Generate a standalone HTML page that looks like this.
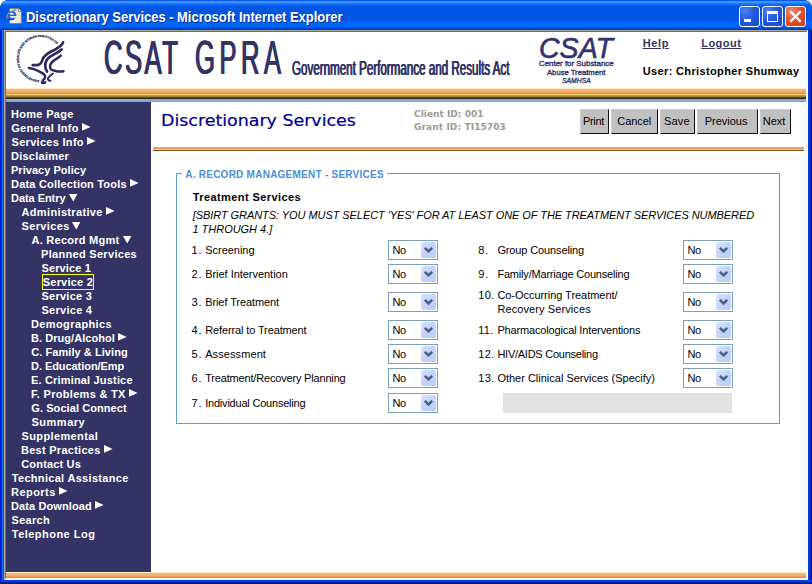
<!DOCTYPE html>
<html lang="en"><head><meta charset="utf-8"><title>Discretionary Services - Microsoft Internet Explorer</title>
<style>
html,body{margin:0;padding:0;background:#fff;}
body{width:812px;height:584px;overflow:hidden;position:relative;font-family:"Liberation Sans",Arial,sans-serif;font-size:11px;color:#000;}
#win{position:absolute;left:0;top:0;width:812px;height:584px;background:#0a3fd6;overflow:hidden;}
#win>*{position:absolute;}
.tx{white-space:nowrap;transform-origin:0 0;}
#tbar{left:0;top:0;width:812px;height:30px;background:linear-gradient(to bottom,#0a58e8 0px,#0a58e8 1px,#3a92ff 1px,#3a92ff 2px,#3890ff 2px,#3890ff 3px,#1a7cff 3px,#1a7cff 4px,#0a6cf8 4px,#0a6cf8 5px,#0560ec 5px,#0560ec 6px,#0359e6 6px,#0359e6 7px,#0256e3 7px,#0256e3 8px,#0055e2 8px,#0055e2 9px,#0055e2 9px,#0055e2 10px,#0055e2 10px,#0055e2 11px,#0055e2 11px,#0055e2 12px,#0055e2 12px,#0055e2 13px,#0055e2 13px,#0055e2 14px,#0055e2 14px,#0055e2 15px,#0055e2 15px,#0055e2 16px,#0055e2 16px,#0055e2 17px,#0055e2 17px,#0055e2 18px,#0055e2 18px,#0055e2 19px,#0058ea 19px,#0058ea 20px,#005cf2 20px,#005cf2 21px,#0062f8 21px,#0062f8 22px,#0066fc 22px,#0066fc 23px,#0068fe 23px,#0068fe 24px,#0067fc 24px,#0067fc 25px,#0064f8 25px,#0064f8 26px,#0060f0 26px,#0060f0 27px,#0058e4 27px,#0058e4 28px,#004cd0 28px,#004cd0 29px,#003cb8 29px,#003cb8 30px);}
.ttl{font:bold 15px/18px "Liberation Sans",Arial,sans-serif;color:#fff;text-shadow:1px 1px 0 #0a2a8a;}
#edge{left:4px;top:30px;width:802px;height:548px;border:1px solid;border-color:#aca899 #fff #fff #aca899;}
#edge2{left:5px;top:31px;width:800px;height:546px;border:1px solid;border-color:#716f64 #f1efe2 #f1efe2 #716f64;}
#client{left:6px;top:32px;width:800px;height:546px;background:#fff;}
#band1{left:6px;top:88px;width:800px;height:11px;background:linear-gradient(to bottom,#fef0b0 0px,#fef0b0 1px,#f1b68a 1px,#f1b68a 2px,#f0b387 2px,#f0b387 3px,#eead7e 3px,#eead7e 4px,#ec9c62 4px,#ec9c62 5px,#e98d4a 5px,#e98d4a 6px,#f0d060 6px,#f0d060 7px,#b09848 7px,#b09848 8px,#988440 8px,#988440 9px,#605020 9px,#605020 10px,#302810 10px,#302810 11px);}
#band2{left:6px;top:99px;width:800px;height:3px;background:linear-gradient(to bottom,#90acda 0px,#90acda 1px,#90acda 1px,#90acda 2px,#80a0d0 2px,#80a0d0 3px);}
#band3{left:6px;top:572px;width:800px;height:6px;background:linear-gradient(to bottom,#fef0b0 0px,#fef0b0 1px,#f1b68a 1px,#f1b68a 2px,#f0b387 2px,#f0b387 3px,#eead7e 3px,#eead7e 4px,#ec9c62 4px,#ec9c62 5px,#e98d4a 5px,#e98d4a 6px);}
#side{left:6px;top:102px;width:145px;height:470px;background:#333366;}
.mi{font:bold 11px/14px "Liberation Sans",Arial,sans-serif;color:#fff;}
#cur{left:42px;top:274px;width:50px;height:14px;border:1px solid #ffff00;}
.h1{font:16px/22px "DejaVu Sans","Liberation Sans",sans-serif;color:#000094;-webkit-text-stroke:0.2px #000094;}
.ids{font:bold 9px/13px "DejaVu Sans","Liberation Sans",sans-serif;color:#999;}
.btn{top:109px;height:25px;box-sizing:border-box;background:#c0c0c0;border:1px solid;border-color:#ccc #111 #111 #ccc;}
.bt{font:11px/14px "Liberation Sans",Arial,sans-serif;color:#000;}
#hr{left:153px;top:147px;width:651px;height:4px;background:linear-gradient(to bottom,#f0a878 0,#f0a878 1px,#eb9860 1px,#eb9860 2px,#f2d060 2px,#f2d060 3px,#6b5c22 3px,#6b5c22 4px);}
#fs{left:176px;top:173px;width:602px;height:249px;border:1px solid #5b9bd5;}
#lgbg{left:182px;top:170px;width:205px;height:8px;background:#fff;}
.leg{font:bold 10px/14px "Liberation Sans",Arial,sans-serif;color:#4a8fd6;}
.ts{font:bold 11px/14px "Liberation Sans",Arial,sans-serif;}
.note{font:italic 11px/14px "Liberation Sans",Arial,sans-serif;}
.lbl{font:11px/14px "Liberation Sans",Arial,sans-serif;}
.sel{width:48px;height:18px;border:1px solid #7f9db9;background:#fff;font:11px/18px "Liberation Sans",Arial,sans-serif;}
.sel span{position:absolute;left:3.5px;top:0;letter-spacing:-0.4px;}
.sel b{position:absolute;left:32px;top:1px;width:15px;height:16px;border-radius:2px;background:linear-gradient(135deg,#d6e2fe 0%,#c3d3fc 55%,#b7cafa 100%);}
.sel b svg{position:absolute;left:3px;top:5px;}
#spec{left:503px;top:393px;width:227px;height:18px;background:#e3e3e3;border:1px solid #dedede;}
.lnk{font:bold 11px/14px "Liberation Sans",Arial,sans-serif;color:#333366;text-decoration:underline;}
.usr{font:bold 11px/14px "Liberation Sans",Arial,sans-serif;color:#000;}
.gpra{font:47.5px/56px "Liberation Sans",Arial,sans-serif;color:#333366;text-shadow:0.9px 0 0 #333366,-0.9px 0 0 #333366;}
.gov{font:20.3px/24px "Liberation Sans",Arial,sans-serif;color:#333366;text-shadow:0.6px 0 0 #333366,-0.6px 0 0 #333366;}
.lg1{font:italic 30px/22px "Liberation Sans",Arial,sans-serif;color:#33336e;-webkit-text-stroke:0.6px #33336e;}
.lg2{font:8px/10px "Liberation Sans",Arial,sans-serif;color:#2e2e66;-webkit-text-stroke:0.35px #2e2e66;}
.lg4{font:italic 7px/10px "Liberation Sans",Arial,sans-serif;color:#2e2e66;-webkit-text-stroke:0.3px #2e2e66;}
#bl{left:0;top:30px;width:4px;height:554px;background:linear-gradient(to right,#0019cf 0,#0019cf 1px,#0831d9 1px,#0831d9 2px,#166aee 2px,#166aee 3px,#0855dd 3px,#0855dd 4px);}
#br{left:808px;top:30px;width:4px;height:554px;background:linear-gradient(to right,#003ce6 0,#003ce6 1px,#0041d8 1px,#0041d8 2px,#001ea0 2px,#001ea0 3px,#00138c 3px,#00138c 4px);}
#bb{left:0;top:580px;width:812px;height:4px;background:linear-gradient(to bottom,#003ce6 0,#003ce6 1px,#0041d8 1px,#0041d8 2px,#001ea0 2px,#001ea0 3px,#00138c 3px,#00138c 4px);}
#tbar{border-radius:7px 7px 0 0;}
#cornl{left:0;top:0;width:7px;height:7px;background:radial-gradient(circle at 7px 7px,transparent 0,transparent 6.5px,#fff 7px);}
#cornr{left:805px;top:0;width:7px;height:7px;background:radial-gradient(circle at 0 7px,transparent 0,transparent 6.5px,#ece9d8 7px);}
.wb{top:6px;width:19px;height:19px;border:1px solid #fff;border-radius:3px;background:radial-gradient(circle at 25% 20%,#4a80f4 0,#255ade 45%,#1a46cc 100%);}
.wb i{position:absolute;box-sizing:border-box;}
.wc{background:radial-gradient(circle at 30% 25%,#f09070 0,#e0502a 50%,#c83a18 100%);}
.num{letter-spacing:1px;}
.num2{letter-spacing:0.35px;}

</style></head>
<body>
<div id="win">
<div id="tbar"></div>
<div id="bl"></div>
<div id="br"></div>
<div id="bb"></div>
<div id="cornl"></div>
<div id="cornr"></div>
<svg id="ieicon" style="left:6px;top:7px" width="18" height="18" viewBox="0 0 18 18">
<path d="M3.7 1.6 H12.6 L15.4 4.4 V16.4 H3.7 Z" fill="#ebebe0" stroke="#8a7f66" stroke-width="1"/>
<path d="M4.4 2.2 H9 V15.8 H4.4 Z" fill="#fbfbf6"/>
<path d="M12.6 1.6 V4.4 H15.4" fill="#fff" stroke="#6b6350" stroke-width="0.8"/>
<ellipse cx="5.6" cy="8.3" rx="3.7" ry="3.6" fill="none" stroke="#2a5ce0" stroke-width="2.1"/>
<rect x="2.4" y="7.6" width="6.6" height="1.5" fill="#2a5ce0"/>
<rect x="6.2" y="9.1" width="4.2" height="1.6" fill="#f3f3ea"/>
<path d="M0.6 11.6 C0.9 7.2 4.2 3.6 9.6 3.2" fill="none" stroke="#d8b040" stroke-width="1"/>
<path d="M6.5 3.4 C8.2 2.8 9.8 2.9 10.4 3.6" fill="none" stroke="#35b0f0" stroke-width="1.2"/>
<path d="M2.6 12.2 C4 13 6 13 8 12.3" fill="none" stroke="#10207a" stroke-width="0.9"/>
</svg>
<div class="wb" style="left:739px"><i style="left:4px;top:12px;width:7px;height:3px;background:#fff"></i></div>
<div class="wb" style="left:762px"><i style="left:4px;top:4px;width:11px;height:11px;border:1px solid #fff;border-top-width:3px"></i></div>
<div class="wb wc" style="left:785px"><svg width="19" height="19" viewBox="0 0 19 19" style="position:absolute;left:0;top:0"><path d="M5 5 L14 14 M14 5 L5 14" stroke="#fff" stroke-width="2.2" stroke-linecap="square" fill="none"/></svg></div>
<div id="edge"></div>
<div id="edge2"></div>
<div id="client"></div>
<div id="band1"></div>
<div id="band2"></div>
<div id="band3"></div>
<div id="side"></div>
<div id="cur"></div>
<svg id="hhs" style="left:8px;top:32px" width="70" height="60" viewBox="0 0 681 584">
<defs><path id="hhsarc" d="M 303 470 A 211 211 0 1 1 477 123"/></defs>
<text font-family="Liberation Serif, serif" font-weight="bold" font-size="29" fill="#2e2e66" stroke="#2e2e66" stroke-width="2.2" textLength="850" lengthAdjust="spacingAndGlyphs"><textPath href="#hhsarc">DEPARTMENT OF HEALTH AND HUMAN SERVICES USA</textPath></text>
<g fill="none" stroke="#2a2a62" stroke-linecap="round" stroke-linejoin="round">
<path d="M536 100 C526 135 480 160 430 185 C380 210 345 235 335 270 C328 300 310 318 285 322 C265 325 250 322 240 322" stroke-width="26"/>
<path d="M522 170 C500 195 450 215 410 240 C375 262 362 295 362 330 C362 350 370 370 380 385" stroke-width="26"/>
<path d="M514 230 C495 250 455 268 430 292 C410 312 405 340 415 362 C440 378 500 392 540 382" stroke-width="24"/>
<path d="M203 350 C240 352 290 375 330 398 C360 415 372 435 355 455 C340 470 330 480 330 493 C340 498 355 496 363 490" stroke-width="24"/>
<path d="M438 404 C420 415 400 430 388 452 C385 465 395 473 413 474" stroke-width="19"/>
</g>
</svg>
<div class="btn" style="left:580px;width:29px"></div>
<div class="btn" style="left:611px;width:47px"></div>
<div class="btn" style="left:660px;width:35px"></div>
<div class="btn" style="left:697px;width:61px"></div>
<div class="btn" style="left:760px;width:31px"></div>
<div id="hr"></div>
<div id="fs"></div>
<div id="lgbg"></div>
<div id="spec"></div>
<svg class="arw" style="left:82.1px;top:123.4px" width="9" height="9" viewBox="0 0 9 9"><path d="M0 0 L8.6 3.9 L0 7.8 Z" fill="#fff"/></svg>
<svg class="arw" style="left:87.1px;top:137.4px" width="9" height="9" viewBox="0 0 9 9"><path d="M0 0 L8.6 3.9 L0 7.8 Z" fill="#fff"/></svg>
<svg class="arw" style="left:130.0px;top:179.4px" width="9" height="9" viewBox="0 0 9 9"><path d="M0 0 L8.6 3.9 L0 7.8 Z" fill="#fff"/></svg>
<svg class="arw" style="left:69.1px;top:194px" width="9" height="9" viewBox="0 0 9 9"><path d="M0 0 L8.4 0 L4.2 7.4 Z" fill="#fff"/></svg>
<svg class="arw" style="left:105.9px;top:207.4px" width="9" height="9" viewBox="0 0 9 9"><path d="M0 0 L8.6 3.9 L0 7.8 Z" fill="#fff"/></svg>
<svg class="arw" style="left:72.4px;top:222px" width="9" height="9" viewBox="0 0 9 9"><path d="M0 0 L8.4 0 L4.2 7.4 Z" fill="#fff"/></svg>
<svg class="arw" style="left:122.6px;top:236px" width="9" height="9" viewBox="0 0 9 9"><path d="M0 0 L8.4 0 L4.2 7.4 Z" fill="#fff"/></svg>
<svg class="arw" style="left:118.0px;top:333.4px" width="9" height="9" viewBox="0 0 9 9"><path d="M0 0 L8.6 3.9 L0 7.8 Z" fill="#fff"/></svg>
<svg class="arw" style="left:129.1px;top:389.4px" width="9" height="9" viewBox="0 0 9 9"><path d="M0 0 L8.6 3.9 L0 7.8 Z" fill="#fff"/></svg>
<svg class="arw" style="left:103.7px;top:445.4px" width="9" height="9" viewBox="0 0 9 9"><path d="M0 0 L8.6 3.9 L0 7.8 Z" fill="#fff"/></svg>
<svg class="arw" style="left:58.9px;top:487.4px" width="9" height="9" viewBox="0 0 9 9"><path d="M0 0 L8.6 3.9 L0 7.8 Z" fill="#fff"/></svg>
<svg class="arw" style="left:94.9px;top:501.4px" width="9" height="9" viewBox="0 0 9 9"><path d="M0 0 L8.6 3.9 L0 7.8 Z" fill="#fff"/></svg>
<div class="sel" style="left:388px;top:240px"><span>No</span><b><svg width="9" height="6" viewBox="0 0 9 6"><path d="M0.8 0.8 L4.5 4.5 L8.2 0.8" fill="none" stroke="#4d6185" stroke-width="2.5"/></svg></b></div>
<div class="sel" style="left:388px;top:264px"><span>No</span><b><svg width="9" height="6" viewBox="0 0 9 6"><path d="M0.8 0.8 L4.5 4.5 L8.2 0.8" fill="none" stroke="#4d6185" stroke-width="2.5"/></svg></b></div>
<div class="sel" style="left:388px;top:292px"><span>No</span><b><svg width="9" height="6" viewBox="0 0 9 6"><path d="M0.8 0.8 L4.5 4.5 L8.2 0.8" fill="none" stroke="#4d6185" stroke-width="2.5"/></svg></b></div>
<div class="sel" style="left:388px;top:320px"><span>No</span><b><svg width="9" height="6" viewBox="0 0 9 6"><path d="M0.8 0.8 L4.5 4.5 L8.2 0.8" fill="none" stroke="#4d6185" stroke-width="2.5"/></svg></b></div>
<div class="sel" style="left:388px;top:344px"><span>No</span><b><svg width="9" height="6" viewBox="0 0 9 6"><path d="M0.8 0.8 L4.5 4.5 L8.2 0.8" fill="none" stroke="#4d6185" stroke-width="2.5"/></svg></b></div>
<div class="sel" style="left:388px;top:368px"><span>No</span><b><svg width="9" height="6" viewBox="0 0 9 6"><path d="M0.8 0.8 L4.5 4.5 L8.2 0.8" fill="none" stroke="#4d6185" stroke-width="2.5"/></svg></b></div>
<div class="sel" style="left:388px;top:393px"><span>No</span><b><svg width="9" height="6" viewBox="0 0 9 6"><path d="M0.8 0.8 L4.5 4.5 L8.2 0.8" fill="none" stroke="#4d6185" stroke-width="2.5"/></svg></b></div>
<div class="sel" style="left:683px;top:240px"><span>No</span><b><svg width="9" height="6" viewBox="0 0 9 6"><path d="M0.8 0.8 L4.5 4.5 L8.2 0.8" fill="none" stroke="#4d6185" stroke-width="2.5"/></svg></b></div>
<div class="sel" style="left:683px;top:264px"><span>No</span><b><svg width="9" height="6" viewBox="0 0 9 6"><path d="M0.8 0.8 L4.5 4.5 L8.2 0.8" fill="none" stroke="#4d6185" stroke-width="2.5"/></svg></b></div>
<div class="sel" style="left:683px;top:292px"><span>No</span><b><svg width="9" height="6" viewBox="0 0 9 6"><path d="M0.8 0.8 L4.5 4.5 L8.2 0.8" fill="none" stroke="#4d6185" stroke-width="2.5"/></svg></b></div>
<div class="sel" style="left:683px;top:320px"><span>No</span><b><svg width="9" height="6" viewBox="0 0 9 6"><path d="M0.8 0.8 L4.5 4.5 L8.2 0.8" fill="none" stroke="#4d6185" stroke-width="2.5"/></svg></b></div>
<div class="sel" style="left:683px;top:344px"><span>No</span><b><svg width="9" height="6" viewBox="0 0 9 6"><path d="M0.8 0.8 L4.5 4.5 L8.2 0.8" fill="none" stroke="#4d6185" stroke-width="2.5"/></svg></b></div>
<div class="sel" style="left:683px;top:368px"><span>No</span><b><svg width="9" height="6" viewBox="0 0 9 6"><path d="M0.8 0.8 L4.5 4.5 L8.2 0.8" fill="none" stroke="#4d6185" stroke-width="2.5"/></svg></b></div>
<div id="m0" class="tx mi" style="left:11.00px;top:107px;letter-spacing:0.306px">Home Page</div>
<div id="m1" class="tx mi" style="left:11.25px;top:121px;letter-spacing:0.282px">General Info</div>
<div id="m2" class="tx mi" style="left:11.50px;top:135px;letter-spacing:0.300px">Services Info</div>
<div id="m3" class="tx mi" style="left:11.00px;top:149px;letter-spacing:0.250px">Disclaimer</div>
<div id="m4" class="tx mi" style="left:11.00px;top:163px;letter-spacing:0.031px">Privacy Policy</div>
<div id="m5" class="tx mi" style="left:11.00px;top:177px;letter-spacing:0.197px">Data Collection Tools</div>
<div id="m6" class="tx mi" style="left:11.00px;top:191px;letter-spacing:-0.050px">Data Entry</div>
<div id="m7" class="tx mi" style="left:21.50px;top:205px;letter-spacing:0.350px">Administrative</div>
<div id="m8" class="tx mi" style="left:21.50px;top:219px;letter-spacing:0.357px">Services</div>
<div id="m9" class="tx mi" style="left:31.50px;top:233px;letter-spacing:0.254px">A. Record Mgmt</div>
<div id="m10" class="tx mi" style="left:41.00px;top:247px;letter-spacing:0.307px">Planned Services</div>
<div id="m11" class="tx mi" style="left:41.50px;top:261px;letter-spacing:0.119px">Service 1</div>
<div id="m12" class="tx mi" style="left:42.75px;top:275px;letter-spacing:0.213px">Service 2</div>
<div id="m13" class="tx mi" style="left:41.50px;top:289px;letter-spacing:0.250px">Service 3</div>
<div id="m14" class="tx mi" style="left:41.50px;top:303px;letter-spacing:0.269px">Service 4</div>
<div id="m15" class="tx mi" style="left:31.00px;top:317px;letter-spacing:0.386px">Demographics</div>
<div id="m16" class="tx mi" style="left:31.00px;top:331px;letter-spacing:0.050px">B. Drug/Alcohol</div>
<div id="m17" class="tx mi" style="left:31.25px;top:345px;letter-spacing:0.062px">C. Family &amp; Living</div>
<div id="m18" class="tx mi" style="left:31.00px;top:359px;letter-spacing:-0.057px">D. Education/Emp</div>
<div id="m19" class="tx mi" style="left:31.00px;top:373px;letter-spacing:0.172px">E. Criminal Justice</div>
<div id="m20" class="tx mi" style="left:31.00px;top:387px;letter-spacing:0.307px">F. Problems &amp; TX</div>
<div id="m21" class="tx mi" style="left:31.25px;top:401px;letter-spacing:0.081px">G. Social Connect</div>
<div id="m22" class="tx mi" style="left:31.50px;top:415px;letter-spacing:0.508px">Summary</div>
<div id="m23" class="tx mi" style="left:21.50px;top:429px;letter-spacing:0.382px">Supplemental</div>
<div id="m24" class="tx mi" style="left:21.00px;top:443px;letter-spacing:0.269px">Best Practices</div>
<div id="m25" class="tx mi" style="left:21.25px;top:457px;letter-spacing:0.167px">Contact Us</div>
<div id="m26" class="tx mi" style="left:11.75px;top:471px;letter-spacing:0.311px">Technical Assistance</div>
<div id="m27" class="tx mi" style="left:11.00px;top:485px;letter-spacing:0.467px">Reports</div>
<div id="m28" class="tx mi" style="left:11.00px;top:499px;letter-spacing:0.108px">Data Download</div>
<div id="m29" class="tx mi" style="left:11.50px;top:513px;letter-spacing:0.310px">Search</div>
<div id="m30" class="tx mi" style="left:11.75px;top:527px;letter-spacing:0.475px">Telephone Log</div>
<div id="ttl" class="tx ttl" style="left:25.50px;top:8.4px;transform:scaleX(0.8629)">Discretionary Services - Microsoft Internet Explorer</div>
<div id="gp1" class="tx gpra" style="left:104.25px;top:30px;letter-spacing:4.568px;transform:scaleX(0.5400)">CSAT</div>
<div id="gp2" class="tx gpra" style="left:194.50px;top:30px;letter-spacing:8.210px;transform:scaleX(0.5400)">GPRA</div>
<div id="gov" class="tx gov" style="left:292.25px;top:55.8px;transform:scaleX(0.5724)">Government Performance and Results Act</div>
<div id="help" class="tx lnk" style="left:642.75px;top:36px;letter-spacing:0.617px">Help</div>
<div id="logout" class="tx lnk" style="left:701.25px;top:36px;letter-spacing:0.460px">Logout</div>
<div id="user" class="tx usr" style="left:642.75px;top:64px;letter-spacing:0.356px">User: Christopher Shumway</div>
<div id="lg1" class="tx lg1" style="left:538.50px;top:36.9px;transform:scaleX(0.9510)">CSAT</div>
<div id="lg2" class="tx lg2" style="left:538.75px;top:59px;transform:scaleX(0.9876)">Center for Substance</div>
<div id="lg3" class="tx lg2" style="left:547.25px;top:68px;transform:scaleX(0.9581)">Abuse Treatment</div>
<div id="lg4" class="tx lg4" style="left:561.75px;top:76px;transform:scaleX(0.9710)">SAMHSA</div>
<div id="h1" class="tx h1" style="left:161.25px;top:110px;transform:scaleX(1.0884)">Discretionary Services</div>
<div id="id1" class="tx ids" style="left:414.00px;top:108px;letter-spacing:0.035px">Client ID: 001</div>
<div id="id2" class="tx ids" style="left:414.00px;top:121px;letter-spacing:0.112px">Grant ID: TI15703</div>
<div id="b1" class="tx bt" style="left:583.00px;top:114px;letter-spacing:-0.325px">Print</div>
<div id="b2" class="tx bt" style="left:617.25px;top:114px;letter-spacing:-0.050px">Cancel</div>
<div id="b3" class="tx bt" style="left:664.00px;top:114px;letter-spacing:0.200px">Save</div>
<div id="b4" class="tx bt" style="left:704.75px;top:114px;letter-spacing:-0.021px">Previous</div>
<div id="b5" class="tx bt" style="left:762.75px;top:114px;letter-spacing:-0.033px">Next</div>
<div id="leg" class="tx leg" style="left:185.25px;top:168px;letter-spacing:0.247px">A. RECORD MANAGEMENT - SERVICES</div>
<div id="ts" class="tx ts" style="left:192.75px;top:190px;letter-spacing:0.409px">Treatment Services</div>
<div id="n1" class="tx note" style="left:192.75px;top:208px;letter-spacing:-0.068px">[SBIRT GRANTS: YOU MUST SELECT 'YES' FOR AT LEAST ONE OF THE TREATMENT SERVICES NUMBERED</div>
<div id="n2" class="tx note" style="left:192.50px;top:222px;letter-spacing:-0.029px">1 THROUGH 4.]</div>
<div id="ln0" class="tx lbl num" style="left:191.50px;top:243px">1.</div>
<div id="lt0" class="tx lbl" style="left:205.20px;top:243px;letter-spacing:-0.019px">Screening</div>
<div id="ln1" class="tx lbl num" style="left:191.50px;top:267px">2.</div>
<div id="lt1" class="tx lbl" style="left:205.20px;top:267px;letter-spacing:-0.035px">Brief Intervention</div>
<div id="ln2" class="tx lbl num" style="left:191.50px;top:295px">3.</div>
<div id="lt2" class="tx lbl" style="left:205.20px;top:295px;letter-spacing:-0.089px">Brief Treatment</div>
<div id="ln3" class="tx lbl num" style="left:191.50px;top:323px">4.</div>
<div id="lt3" class="tx lbl" style="left:205.20px;top:323px;letter-spacing:-0.123px">Referral to Treatment</div>
<div id="ln4" class="tx lbl num" style="left:191.50px;top:347px">5.</div>
<div id="lt4" class="tx lbl" style="left:205.20px;top:347px;letter-spacing:0.089px">Assessment</div>
<div id="ln5" class="tx lbl num" style="left:191.50px;top:371px">6.</div>
<div id="lt5" class="tx lbl" style="left:205.20px;top:371px;letter-spacing:-0.177px">Treatment/Recovery Planning</div>
<div id="ln6" class="tx lbl num" style="left:191.50px;top:396px">7.</div>
<div id="lt6" class="tx lbl" style="left:205.20px;top:396px;letter-spacing:-0.208px">Individual Counseling</div>
<div id="rn0" class="tx lbl num" style="left:478.20px;top:243px">8.</div>
<div id="rt0" class="tx lbl" style="left:497.40px;top:243px;letter-spacing:-0.127px">Group Counseling</div>
<div id="rn1" class="tx lbl num" style="left:478.20px;top:267px">9.</div>
<div id="rt1" class="tx lbl" style="left:497.40px;top:267px;letter-spacing:-0.192px">Family/Marriage Counseling</div>
<div id="rn2" class="tx lbl num2" style="left:478.20px;top:288px">10.</div>
<div id="rt2" class="tx lbl" style="left:497.40px;top:288px;letter-spacing:-0.041px">Co-Occurring Treatment/</div>
<div id="rn3" class="tx lbl num2" style="left:478.20px;top:323px">11.</div>
<div id="rt3" class="tx lbl" style="left:497.40px;top:323px;letter-spacing:-0.150px">Pharmacological Interventions</div>
<div id="rn4" class="tx lbl num2" style="left:478.20px;top:347px">12.</div>
<div id="rt4" class="tx lbl" style="left:497.40px;top:347px;letter-spacing:-0.253px">HIV/AIDS Counseling</div>
<div id="rn5" class="tx lbl num2" style="left:478.20px;top:371px">13.</div>
<div id="rt5" class="tx lbl" style="left:497.40px;top:371px;letter-spacing:-0.005px">Other Clinical Services (Specify)</div>
<div id="rt2b" class="tx lbl" style="left:497.40px;top:302px;letter-spacing:0.097px">Recovery Services</div>
</div>
</body></html>
